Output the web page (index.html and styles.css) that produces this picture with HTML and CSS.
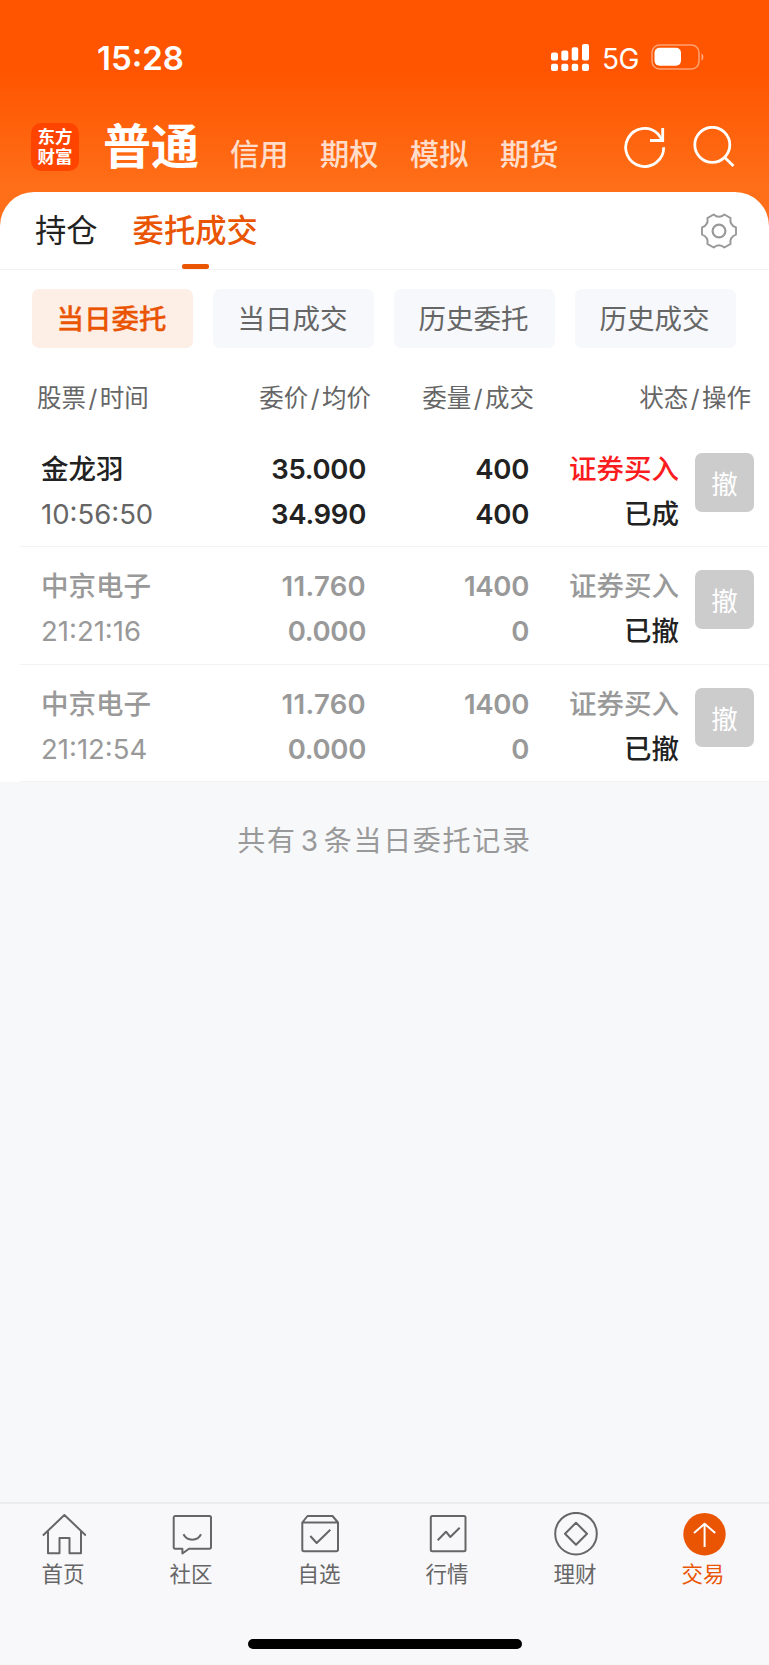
FILE: index.html
```html
<!DOCTYPE html>
<html lang="zh-CN">
<head>
<meta charset="utf-8">
<title>委托成交</title>
<link rel="stylesheet" href="styles.css">
</head>
<body>
<div class="app">
  <header class="top">
    <div class="status">
      <span class="clock">15:28</span>
      <div class="status-right">
        <svg class="signal" width="39" height="28" viewBox="0 0 39 28" fill="#fff">
          <rect x="0" y="8.500" width="7" height="8" rx="2"/><rect x="10.300" y="6.500" width="7" height="10" rx="2"/><rect x="20.700" y="3.300" width="6.500" height="13.200" rx="2"/><rect x="31" y="0" width="7" height="16.500" rx="2"/>
          <rect x="0" y="19.800" width="7" height="7.200" rx="2"/><rect x="10.300" y="19.800" width="7" height="7.200" rx="2"/><rect x="20.700" y="19.800" width="6.500" height="7.200" rx="2"/><rect x="31" y="19.800" width="7" height="7.200" rx="2"/>
        </svg>
        <span class="net">5G</span>
        <svg class="battery" width="54" height="26" viewBox="0 0 54 26">
          <rect x="1" y="1" width="47" height="24" rx="7.500" fill="none" stroke="#fff" stroke-opacity=".45" stroke-width="1.500"/>
          <rect x="3.500" y="3.800" width="26.500" height="18" rx="5" fill="#fff"/>
          <path d="M50.500 9.500c2.500 1 2.500 6 0 7z" fill="#fff" fill-opacity=".5"/>
        </svg>
      </div>
    </div>
    <nav class="accounts">
      <div class="logo"><span>东方</span><span>财富</span></div>
      <span class="account-current">普通</span>
      <span class="account">信用</span>
      <span class="account">期权</span>
      <span class="account">模拟</span>
      <span class="account">期货</span>
      <div class="tools">
        <svg width="42" height="42" viewBox="0 0 42 42" fill="none" stroke="#fff" stroke-width="2.800">
          <path d="M39.700 21.300A19 19 0 1 1 33.800 7.700L38 13.500"/><path d="M38.700 2v12.500H26"/>
        </svg>
        <svg width="42" height="42" viewBox="0 0 42 42" fill="none" stroke="#fff" stroke-width="2.800">
          <circle cx="19.300" cy="18.800" r="17.500"/><path d="M31.500 31.300l9 8.700"/>
        </svg>
      </div>
    </nav>
  </header>

  <main class="sheet">
    <div class="tabs">
      <span class="tab">持仓</span>
      <span class="tab tab-active">委托成交</span>
      <svg class="gear" width="38" height="38" viewBox="-19 -19 38 38" fill="none" stroke="#999" stroke-width="1.900" stroke-linejoin="round">
        <path d="M17 -3.600L17 3.600C12.600 5.200 10.700 8.500 11.620 12.920L5.380 16.520C1.900 13.480 -1.900 13.480 -5.380 16.520L-11.620 12.920C-10.700 8.500 -12.600 5.200 -17 3.600L-17 -3.600C-12.600 -5.200 -10.700 -8.500 -11.620 -12.920L-5.380 -16.520C-1.900 -13.480 1.900 -13.480 5.380 -16.520L11.620 -12.920C10.700 -8.500 12.600 -5.200 17 -3.600Z"/>
        <circle r="6.400" stroke-width="2.200"/>
      </svg>
    </div>
    <div class="pills">
      <span class="pill pill-active">当日委托</span>
      <span class="pill">当日成交</span>
      <span class="pill">历史委托</span>
      <span class="pill">历史成交</span>
    </div>
    <div class="grid head">
      <span>股票<i>/</i>时间</span><span>委价<i>/</i>均价</span><span>委量<i>/</i>成交</span><span>状态<i>/</i>操作</span>
    </div>

    <div class="grid order">
      <div class="cell"><b>金龙羽</b><span class="time">10:56:50</span></div>
      <div class="cell num"><b>35.000</b><b>34.990</b></div>
      <div class="cell num"><b>400</b><b>400</b></div>
      <div class="cell"><b class="buy">证券买入</b><b>已成</b></div>
      <button class="cancel">撤</button>
    </div>
    <div class="grid order muted">
      <div class="cell"><b>中京电子</b><span class="time">21:21:16</span></div>
      <div class="cell num"><b class="wide">11.760</b><b>0.000</b></div>
      <div class="cell num"><b>1400</b><b>0</b></div>
      <div class="cell"><b>证券买入</b><b class="state">已撤</b></div>
      <button class="cancel">撤</button>
    </div>
    <div class="grid order muted">
      <div class="cell"><b>中京电子</b><span class="time">21:12:54</span></div>
      <div class="cell num"><b class="wide">11.760</b><b>0.000</b></div>
      <div class="cell num"><b>1400</b><b>0</b></div>
      <div class="cell"><b>证券买入</b><b class="state">已撤</b></div>
      <button class="cancel">撤</button>
    </div>
  </main>

  <p class="summary">共有<span>3</span>条当日委托记录</p>

  <footer class="bottom">
    <nav class="bar">
      <div class="item">
        <svg class="icon" viewBox="0 0 44 44"><path d="M.9 23.500L22.400 3L43.900 23.500M6 19.500V41.200H17.500V26H27.500V41.200H39V19.500"/></svg>
        <span>首页</span>
      </div>
      <div class="item">
        <svg class="icon" viewBox="0 0 44 44"><path d="M5 4H39.500Q41 4 41 5.500V35Q41 36.700 39.500 36.700H19L12.400 41.500V36.700H5Q3.700 36.700 3.700 35V5.500Q3.700 4 5 4ZM13.500 22.300C17 29.500 27.500 29.500 31 22.300"/></svg>
        <span>社区</span>
      </div>
      <div class="item">
        <svg class="icon" viewBox="0 0 44 44"><path d="M4.300 10.500L9.500 4H34.500L40 10.500V37.500Q40 39.300 38.200 39.300H6Q4.300 39.300 4.300 37.500ZM4.300 10.500H40M12.300 24L18.700 31L32.300 17.700"/></svg>
        <span>自选</span>
      </div>
      <div class="item">
        <svg class="icon" viewBox="0 0 44 44"><rect x="4.800" y="4" width="34.700" height="35.300" rx="1.500"/><path d="M11.700 28.300L20 19.700L24.300 25L33.700 15.700"/></svg>
        <span>行情</span>
      </div>
      <div class="item">
        <svg class="icon" viewBox="0 0 44 44"><circle cx="22" cy="21.700" r="20.800"/><path d="M22 10.700L33 21.700L22 32.700L11 21.700Z"/></svg>
        <span>理财</span>
      </div>
      <div class="item item-active">
        <svg class="icon" viewBox="0 0 44 44"><circle cx="22.500" cy="22.200" r="21.200" fill="#ea5504" stroke="none"/><path d="M12 21L22.600 11.800L33.200 21M22.600 11.800V35" stroke="#fff"/></svg>
        <span>交易</span>
      </div>
    </nav>
    <div class="home-indicator"></div>
  </footer>
</div>
</body>
</html>
```
FILE: styles.css
```css
* { box-sizing: border-box; }
body {
  margin: 0;
  font-family: Inter, "Noto Sans CJK SC", sans-serif;
  color: #222;
  background: #f7f8fa;
}
.app {
  display: flex;
  flex-direction: column;
  width: 769px;
  height: 1665px;
  overflow: hidden;
}
.top {
  height: 232px;
  flex: none;
  color: #fff;
  background: linear-gradient(#ff5500 0, #ff5500 72px, #ff6f19 190px);
}
.status {
  display: flex;
  justify-content: space-between;
  height: 116px;
  padding: 0 64px 0 97px;
}
.clock {
  font-size: 33px;
  font-weight: 600;
  line-height: 40px;
  padding-top: 38px;
}
.status-right { display: flex; align-items: flex-start; }
.signal { margin: 44px 12px 0 0; }
.net {
  width: 36px;
  font-size: 28px;
  line-height: 34px;
  padding-top: 42px;
  letter-spacing: -.5px;
}
.battery { margin: 44px 0 0 13px; }
.accounts {
  display: flex;
  height: 62px;
  padding: 0 34px 0 31px;
}
.logo {
  display: flex;
  flex-direction: column;
  align-items: center;
  width: 48px;
  height: 48px;
  margin-top: 7px;
  padding-top: 4px;
  border-radius: 10px;
  background: #ff4400;
  font-size: 17.500px;
  font-weight: 700;
  line-height: 19.500px;
}
.account-current {
  margin: 0 9px 0 24px;
  padding-top: 1px;
  font-size: 48px;
  font-weight: 700;
  line-height: 60px;
}
.account {
  width: 90px;
  padding: 19px 0 0 22px;
  font-size: 29.200px;
  font-weight: 500;
  line-height: 40px;
  white-space: nowrap;
  color: rgba(255,255,255,.8);
}
.tools { display: flex; gap: 27px; margin: 10px 0 0 auto; }
.sheet {
  flex: none;
  height: 590px;
  margin-top: -40px;
  border-radius: 34px 34px 0 0;
  background: #fff;
}
.tabs {
  display: flex;
  height: 78px;
  padding: 0 31px 0 35px;
  border-bottom: 1px solid #f2f2f3;
  font-size: 31.300px;
  line-height: 40px;
}
.tab { padding-top: 19px; height: 77px; }
.tab-active {
  display: flex;
  flex-direction: column;
  align-items: center;
  justify-content: space-between;
  margin-left: 35px;
  font-weight: 500;
  color: #ea5504;
}
.tab-active::after {
  content: "";
  width: 27px;
  height: 5px;
  border-radius: 2px;
  background: #ea5504;
}
.gear { margin: 20px 0 0 auto; }
.pills {
  display: grid;
  grid-template-columns: repeat(4, 161px);
  gap: 20px;
  padding: 19px 32px 0;
}
.pill {
  height: 59px;
  padding-right: 2px;
  border-radius: 7px;
  background: #f7f8fb;
  color: #666;
  font-size: 27.500px;
  line-height: 61px;
  text-align: center;
}
.pill-active { background: #fdeee6; color: #ea5504; font-weight: 500; -webkit-text-stroke: .3px #ea5504; }
.grid {
  display: grid;
  grid-template-columns: 160px 166px 162px 151px 76px;
}
.head {
  grid-template-columns: 160px 174px 163px 217px;
  height: 82px;
  padding-left: 37px;
  color: #666;
  font-size: 24.500px;
  line-height: 100px;
}
.head span { text-align: right; white-space: nowrap; }
.head span:first-child, .cell:first-child { text-align: left; }
.head i { font-style: normal; padding: 0 2.500px; }
.order {
  height: 117.300px;
  margin-left: 20px;
  padding: 17px 0 0 20px;
  border-bottom: 1.500px solid #f3f3f4;
}
.cell {
  display: flex;
  flex-direction: column;
  text-align: right;
  font-size: 27.500px;
  line-height: 45px;
}
.cell:first-child { padding-left: 1px; }
.cell b { font-weight: 500; white-space: nowrap; }
.num b { font-weight: 600; letter-spacing: -.3px; }
.num .wide { letter-spacing: .3px; }
.num + .num { padding-right: 0; margin-right: -1px; }
.time { color: #666; }
.buy { color: #fb1c20; }
.muted, .muted .time { color: #999; }
.muted .state { color: #222; }
.cancel {
  width: 59px;
  height: 59px;
  margin: 6px 0 0 16px;
  padding: 0;
  border: 0;
  border-radius: 7px;
  background: #ccc;
  color: #fff;
  font: 26.500px/57px "Noto Sans CJK SC", sans-serif;
}
.summary {
  margin: 0;
  padding-top: 38px;
  color: #999;
  font-size: 28px;
  line-height: 42px;
  letter-spacing: 1.700px;
  text-align: center;
}
.summary span { padding: 0 4px; }
.bottom {
  margin-top: auto;
  height: 163px;
  border-top: 2px solid #ebecee;
  background: #f8f8fb;
}
.bar {
  display: grid;
  grid-template-columns: repeat(6, 128px);
  height: 135px;
}
.item {
  display: flex;
  flex-direction: column;
  align-items: center;
  padding-top: 8px;
  color: #666;
  font-size: 21.500px;
  line-height: 36px;
}
.item span { margin-right: 2px; }
.item-active { color: #ea5504; }
.icon {
  width: 44px;
  height: 44px;
  fill: none;
  stroke: #666;
  stroke-width: 2;
  stroke-linejoin: round;
}
.home-indicator {
  width: 274px;
  height: 10px;
  margin: 0 auto;
  border-radius: 5px;
  background: #000;
}
```
